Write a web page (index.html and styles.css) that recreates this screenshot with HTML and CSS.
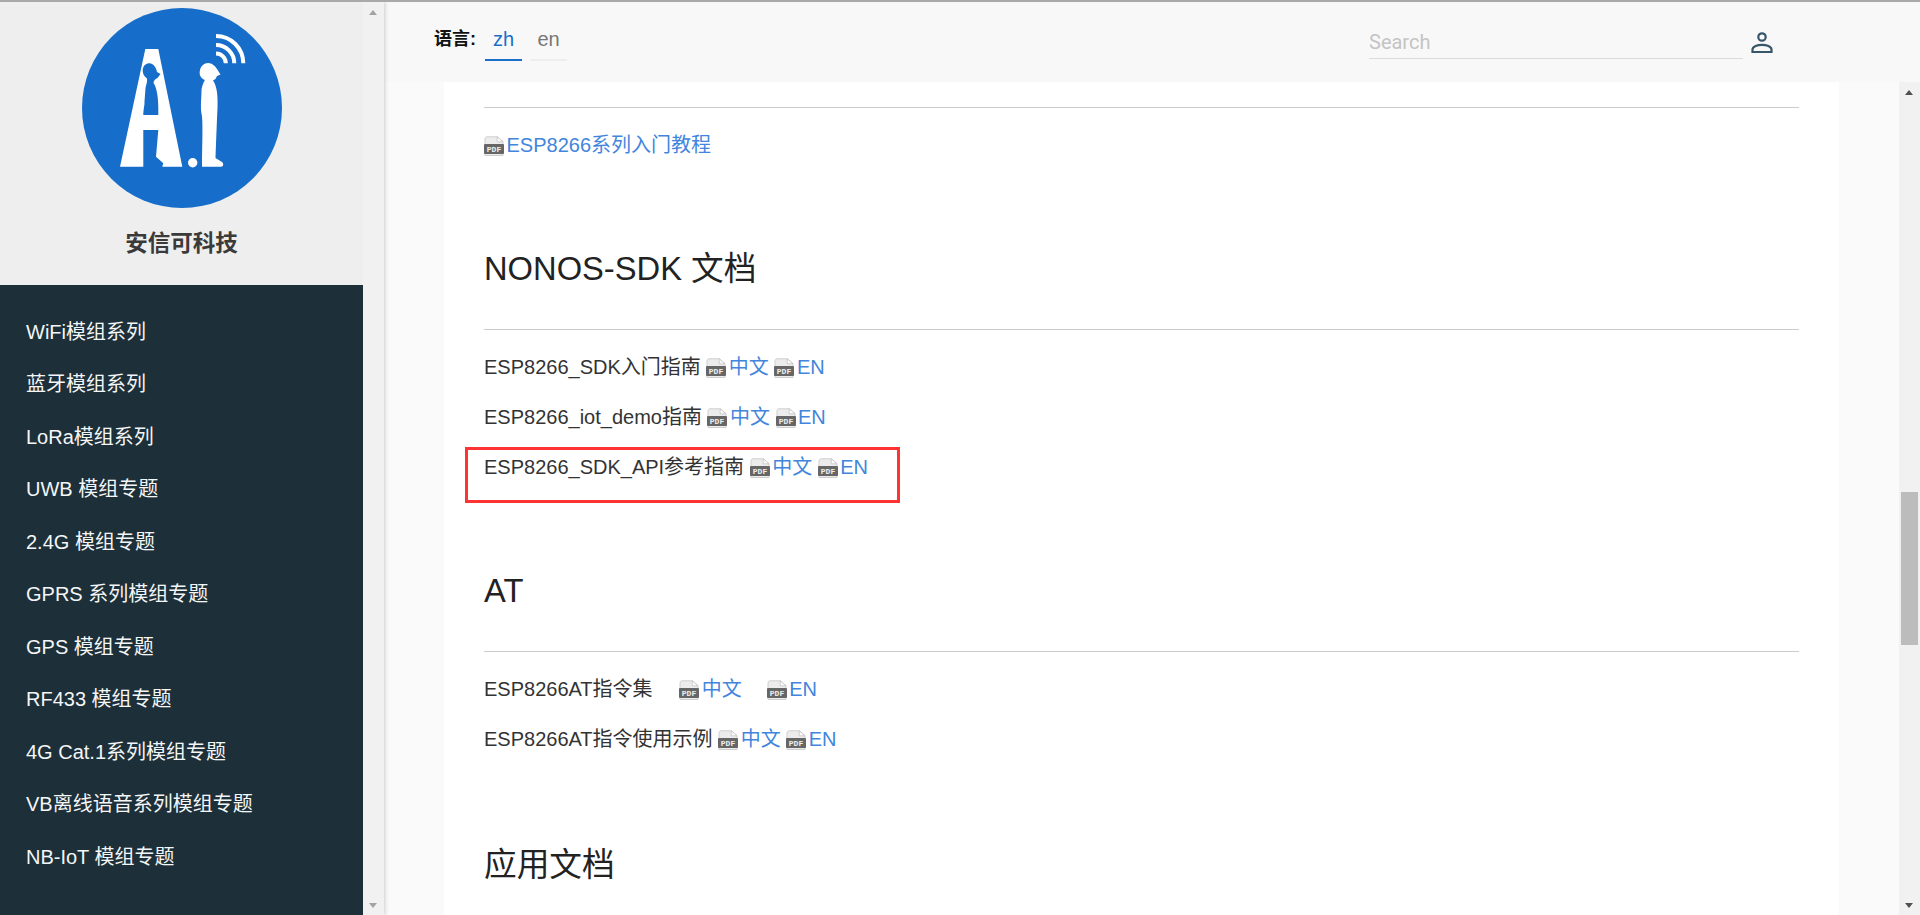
FILE: index.html
```html
<!DOCTYPE html>
<html lang="zh">
<head>
<meta charset="utf-8">
<title>安信可科技</title>
<link rel="stylesheet" href="styles.css">
</head>
<body>
<div class="page">
  <aside class="side">
    <div class="side-main">
      <div class="brand">
        <svg class="logo" viewBox="0 0 200 200" role="img" aria-label="AI">
          <circle cx="100" cy="100" r="100" fill="#166dca"/>
          <path fill="#fff" fill-rule="evenodd" d="M63.3 41H76.3L100.3 158.7H80.3L81.3 155.3L74 148.7L76.3 122H61.3V158.7H38ZM61.3 107H76.3V100C76.3 90 75 80 71.5 75C72 71.5 74 71 75.5 70L78.5 66L75 64C74 58 70 55 67 55.3C63 55.5 60.7 59 60.7 62.5C60.7 66 62.5 69 65 70.5C65.5 74 64 77 63.5 80C63 88 62.5 92 62.5 96C61.8 100 61.3 104 61.3 107Z"/>
          <path fill="#fff" d="M126 55C130 55 133 58 135 61L138.5 66.5L135 68L133.5 71L131 72.500C135 78 136 88 135.500 100C135 110 134.500 125 133.500 150L140 154C142 156 141.500 158.700 139 158.700H120C120 140 121 120 120 108C118 100 119.500 90 119.500 82C120 78 122 73 123 72C118 70 117 66 118 62C119 58 122 55 126 55Z"/>
          <circle cx="110.700" cy="154.700" r="4.700" fill="#fff"/>
          <g fill="none" stroke="#fff" stroke-width="4">
            <path d="M134 28A27.300 27.300 0 0 1 161.300 55.300"/>
            <path d="M134 37A18.300 18.300 0 0 1 152.300 55.300"/>
            <path d="M134 45.500A9.800 9.800 0 0 1 143.800 55.300"/>
          </g>
        </svg>
        <div class="brand-name">安信可科技</div>
      </div>
      <nav class="menu">
        <a class="menu-item">WiFi模组系列</a>
        <a class="menu-item">蓝牙模组系列</a>
        <a class="menu-item">LoRa模组系列</a>
        <a class="menu-item">UWB 模组专题</a>
        <a class="menu-item">2.4G 模组专题</a>
        <a class="menu-item">GPRS 系列模组专题</a>
        <a class="menu-item">GPS 模组专题</a>
        <a class="menu-item">RF433 模组专题</a>
        <a class="menu-item">4G Cat.1系列模组专题</a>
        <a class="menu-item">VB离线语音系列模组专题</a>
        <a class="menu-item">NB-IoT 模组专题</a>
      </nav>
    </div>
    <div class="bar bar-side">
      <span class="arrow up light"></span>
      <span class="arrow down light"></span>
    </div>
  </aside>
  <div class="right">
    <header class="top">
      <div class="lang">
        <b class="lang-label">语言:</b>
        <span class="tab on">zh</span>
        <span class="tab">en</span>
      </div>
      <div class="tools">
        <div class="search">Search</div>
        <svg class="user" viewBox="0 0 22 21" aria-hidden="true">
          <circle cx="11" cy="5" r="3.700" fill="none" stroke="#37566a" stroke-width="2.200"/>
          <path d="M1.500 20V17.500C1.500 14.500 6.500 12.800 11 12.800S20.500 14.500 20.500 17.500V20Z" fill="none" stroke="#37566a" stroke-width="2.200"/>
        </svg>
      </div>
    </header>
    <div class="scroller">
      <main class="view">
        <article class="card">
          <hr class="rule">
          <p class="row row-lead"><a class="link"><svg class="pdf" viewBox="0 0 20 20"><path class="sheet" d="M2.500 .8H13.500L19 5.600V19.500H1V2.200Z"/><path class="fold" d="M13.200 .8V5.800H19Z"/><rect class="band" y="8" width="20" height="10" rx="1"/><text class="pdf-label" x="10" y="15.600">PDF</text></svg>ESP8266系列入门教程</a></p>

          <h2 class="title">NONOS-SDK 文档</h2>
          <hr class="rule">
          <p class="row">ESP8266_SDK入门指南 <a class="link"><svg class="pdf" viewBox="0 0 20 20"><path class="sheet" d="M2.500 .8H13.500L19 5.600V19.500H1V2.200Z"/><path class="fold" d="M13.200 .8V5.800H19Z"/><rect class="band" y="8" width="20" height="10" rx="1"/><text class="pdf-label" x="10" y="15.600">PDF</text></svg>中文</a> <a class="link"><svg class="pdf" viewBox="0 0 20 20"><path class="sheet" d="M2.500 .8H13.500L19 5.600V19.500H1V2.200Z"/><path class="fold" d="M13.200 .8V5.800H19Z"/><rect class="band" y="8" width="20" height="10" rx="1"/><text class="pdf-label" x="10" y="15.600">PDF</text></svg>EN</a></p>
          <p class="row">ESP8266_iot_demo指南 <a class="link"><svg class="pdf" viewBox="0 0 20 20"><path class="sheet" d="M2.500 .8H13.500L19 5.600V19.500H1V2.200Z"/><path class="fold" d="M13.200 .8V5.800H19Z"/><rect class="band" y="8" width="20" height="10" rx="1"/><text class="pdf-label" x="10" y="15.600">PDF</text></svg>中文</a> <a class="link"><svg class="pdf" viewBox="0 0 20 20"><path class="sheet" d="M2.500 .8H13.500L19 5.600V19.500H1V2.200Z"/><path class="fold" d="M13.200 .8V5.800H19Z"/><rect class="band" y="8" width="20" height="10" rx="1"/><text class="pdf-label" x="10" y="15.600">PDF</text></svg>EN</a></p>
          <div class="boxed">
            <p class="row">ESP8266_SDK_API参考指南 <a class="link"><svg class="pdf" viewBox="0 0 20 20"><path class="sheet" d="M2.500 .8H13.500L19 5.600V19.500H1V2.200Z"/><path class="fold" d="M13.200 .8V5.800H19Z"/><rect class="band" y="8" width="20" height="10" rx="1"/><text class="pdf-label" x="10" y="15.600">PDF</text></svg>中文</a> <a class="link"><svg class="pdf" viewBox="0 0 20 20"><path class="sheet" d="M2.500 .8H13.500L19 5.600V19.500H1V2.200Z"/><path class="fold" d="M13.200 .8V5.800H19Z"/><rect class="band" y="8" width="20" height="10" rx="1"/><text class="pdf-label" x="10" y="15.600">PDF</text></svg>EN</a></p>
            <span class="mark"></span>
          </div>

          <h2 class="title">AT</h2>
          <hr class="rule">
          <p class="row">ESP8266AT指令集<span class="gap gap-a"></span><a class="link"><svg class="pdf" viewBox="0 0 20 20"><path class="sheet" d="M2.500 .8H13.500L19 5.600V19.500H1V2.200Z"/><path class="fold" d="M13.200 .8V5.800H19Z"/><rect class="band" y="8" width="20" height="10" rx="1"/><text class="pdf-label" x="10" y="15.600">PDF</text></svg>中文</a><span class="gap gap-b"></span><a class="link"><svg class="pdf" viewBox="0 0 20 20"><path class="sheet" d="M2.500 .8H13.500L19 5.600V19.500H1V2.200Z"/><path class="fold" d="M13.200 .8V5.800H19Z"/><rect class="band" y="8" width="20" height="10" rx="1"/><text class="pdf-label" x="10" y="15.600">PDF</text></svg>EN</a></p>
          <p class="row">ESP8266AT指令使用示例 <a class="link"><svg class="pdf" viewBox="0 0 20 20"><path class="sheet" d="M2.500 .8H13.500L19 5.600V19.500H1V2.200Z"/><path class="fold" d="M13.200 .8V5.800H19Z"/><rect class="band" y="8" width="20" height="10" rx="1"/><text class="pdf-label" x="10" y="15.600">PDF</text></svg>中文</a> <a class="link"><svg class="pdf" viewBox="0 0 20 20"><path class="sheet" d="M2.500 .8H13.500L19 5.600V19.500H1V2.200Z"/><path class="fold" d="M13.200 .8V5.800H19Z"/><rect class="band" y="8" width="20" height="10" rx="1"/><text class="pdf-label" x="10" y="15.600">PDF</text></svg>EN</a></p>

          <h2 class="title title-app">应用文档</h2>
        </article>
      </main>
      <div class="bar bar-main">
        <span class="arrow up"></span>
        <span class="thumb"></span>
        <span class="arrow down"></span>
      </div>
    </div>
  </div>
</div>
</body>
</html>
```

FILE: styles.css
```css
* { box-sizing: border-box; }
html, body { margin: 0; height: 100%; overflow: hidden; }
body {
  font-family: "Liberation Sans", "Noto Sans CJK SC", sans-serif;
  font-size: 20px;
  color: #333;
  background: #fafafa;
}

.page {
  display: flex;
  height: 915px;
  border-top: 2px solid #a9a9a7;
  overflow: hidden;
}

/* sidebar */
.side {
  flex: 0 0 384px;
  display: flex;
  box-shadow: 1px 0 4px rgba(0, 0, 0, .18);
  z-index: 1;
}
.side-main {
  flex: 1;
  display: flex;
  flex-direction: column;
  background: #1d2f38;
}
.brand {
  height: 283px;
  flex: none;
  background: #eeeeee;
  padding-top: 6px;
  display: flex;
  flex-direction: column;
  align-items: center;
}
.logo { width: 200px; height: 200px; flex: none; }
.brand-name {
  margin-top: 22px;
  font-size: 22.500px;
  font-weight: 700;
  line-height: 28px;
  color: #3a3a3a;
}
.menu { padding-top: 20.500px; }
.menu-item {
  display: block;
  height: 52.500px;
  line-height: 52.500px;
  padding-left: 26px;
  font-size: 20px;
  color: #f4f6f7;
}

/* scrollbars */
.bar {
  flex: 0 0 21px;
  background: #f1f1f1;
  display: flex;
  flex-direction: column;
  align-items: center;
  position: relative;
}
.arrow {
  position: absolute;
  left: 6px;
  width: 0;
  height: 0;
  border-left: 4.500px solid transparent;
  border-right: 4.500px solid transparent;
}
.arrow.up { top: 8px; border-bottom: 5px solid #505050; }
.arrow.down { bottom: 7px; border-top: 5px solid #505050; }
.arrow.light.up { border-bottom-color: #a3a3a3; }
.arrow.light.down { border-top-color: #a3a3a3; }
.thumb {
  width: 17px;
  height: 153px;
  margin-top: 410px;
  background: #bcbcbc;
}

/* right column */
.right {
  flex: 1;
  display: flex;
  flex-direction: column;
  min-width: 0;
}
.top {
  flex: 0 0 80px;
  background: #f8f8f8;
  display: flex;
  justify-content: space-between;
  padding: 0 147px 0 50px;
}
.lang { display: flex; align-items: flex-start; }
.lang-label {
  font-size: 18px;
  color: #111;
  line-height: 24px;
  margin-top: 25px;
  width: 51px;
}
.tab {
  height: 59px;
  padding-top: 23px;
  line-height: 28px;
  width: 37px;
  text-align: center;
  color: #777;
  border-bottom: 2px solid #eeeeee;
  margin-right: 8px;
}
.tab.on { color: #1a6fca; border-bottom-color: #1a6fca; }
.tools { display: flex; align-items: flex-start; }
.search {
  width: 374px;
  height: 57px;
  padding-top: 26px;
  font-family: Roboto, "Liberation Sans", sans-serif;
  font-size: 20px;
  line-height: 28px;
  color: #c4c4c4;
  border-bottom: 1px solid #dcdcdc;
}
.user { width: 22px; height: 21px; margin: 30px 0 0 8px; }

.scroller { flex: 1; display: flex; min-height: 0; }
.view { flex: 1; padding: 0 60px; overflow: hidden; background: #fafafa; }
.card { background: #fff; padding: 25px 40px 0; height: 100%; }
.rule { border: 0; border-top: 1px solid #ccc; margin: 0 0 22px; }
.row { margin: 0 0 20px; line-height: 30px; }
.row-lead { margin-bottom: 19px; }
.title {
  margin: 87px 0 38px;
  font-size: 32.700px;
  font-weight: 400;
  line-height: 44px;
  color: #222;
}
.title-app { margin-top: 89px; }
.gap { display: inline-block; }
.gap-a { width: 26.600px; }
.gap-b { width: 25px; }
.link { color: #4285dc; text-decoration: none; }
.pdf { width: 20px; height: 20px; vertical-align: -4px; margin-right: 2.500px; }
.sheet { fill: #ececec; stroke: #cfcfcf; stroke-width: 1; }
.fold { fill: #fff; stroke: #c4c4c4; stroke-width: .8; }
.band { fill: #666; }
.pdf-label {
  font-family: "Liberation Mono", monospace;
  font-size: 8px;
  font-weight: 700;
  fill: #efefef;
  text-anchor: middle;
}

.boxed { position: relative; }
.mark {
  position: absolute;
  left: -19px;
  top: -5px;
  width: 435px;
  height: 56px;
  border: 3px solid #f33;
}
```
